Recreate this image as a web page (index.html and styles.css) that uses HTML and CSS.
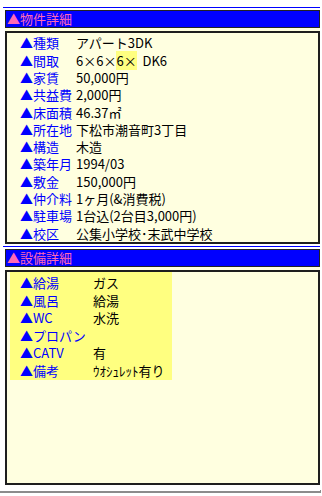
FILE: index.html
```html
<!DOCTYPE html>
<html lang="ja">
<head>
<meta charset="utf-8">
<title>物件詳細</title>
<link rel="stylesheet" href="styles.css">
</head>
<body>
<div class="page">
  <section class="panel">
    <div class="rule"></div>
    <div class="frame">
      <h2 class="head">▲物件詳細</h2>
      <dl class="box spec">
        <div class="row"><dt>▲種類</dt><dd>アパート3DK</dd></div>
        <div class="row"><dt>▲間取</dt><dd>6×6×<span class="mark">6×</span>&nbsp;&nbsp;DK6</dd></div>
        <div class="row"><dt>▲家賃</dt><dd>50,000円</dd></div>
        <div class="row"><dt>▲共益費</dt><dd>2,000円</dd></div>
        <div class="row"><dt>▲床面積</dt><dd>46.37㎡</dd></div>
        <div class="row"><dt>▲所在地</dt><dd>下松市潮音町3丁目</dd></div>
        <div class="row"><dt>▲構造</dt><dd>木造</dd></div>
        <div class="row"><dt>▲築年月</dt><dd>1994/03</dd></div>
        <div class="row"><dt>▲敷金</dt><dd>150,000円</dd></div>
        <div class="row"><dt>▲仲介料</dt><dd>1ヶ月(&amp;消費税)</dd></div>
        <div class="row"><dt>▲駐車場</dt><dd>1台込(2台目3,000円)</dd></div>
        <div class="row"><dt>▲校区</dt><dd>公集小学校･末武中学校</dd></div>
      </dl>
    </div>
  </section>

  <section class="panel second">
    <div class="rule"></div>
    <div class="frame">
      <h2 class="head">▲設備詳細</h2>
      <div class="box facilities">
        <dl class="equip">
          <div class="row"><dt>▲給湯</dt><dd>ガス</dd></div>
          <div class="row"><dt>▲風呂</dt><dd>給湯</dd></div>
          <div class="row"><dt>▲WC</dt><dd>水洗</dd></div>
          <div class="row"><dt>▲プロパン</dt><dd></dd></div>
          <div class="row"><dt>▲CATV</dt><dd>有</dd></div>
          <div class="row"><dt>▲備考</dt><dd>ｳｵｼｭﾚｯﾄ有り</dd></div>
        </dl>
      </div>
    </div>
  </section>

  <div class="base"></div>
</div>
</body>
</html>
```

FILE: styles.css
```css
* {
  box-sizing: border-box;
}

body {
  margin: 0;
  background: #fff;
  font-family: "Noto Sans CJK JP", "Noto Sans", sans-serif;
  font-size: 13px;
  color: #000;
}

.page {
  padding-top: 7px;
}

/* pale yellow panel ground */
.frame,
.box {
  background-color: #ffffe0;
}

.panel {
  margin-left: 3px;
  width: 317px;
}

.panel.second {
  margin-top: 2px;
}

.rule {
  height: 1px;
  background: #0000ff;
  margin-bottom: 2px;
}

.frame {
  margin-left: 2px;
  width: 315px;
  display: flex;
  flex-direction: column;
  gap: 3px;
}

.head {
  margin: 0;
  height: 18px;
  border: 1px solid #222;
  background: #0000ff;
  color: #ff69b4;
  font-size: 13px;
  font-weight: normal;
  line-height: 16px;
  padding-left: 1px;
}

.box {
  border: 2px solid #1e1e1e;
  margin: 0;
}

dl,
dt,
dd {
  margin: 0;
}

.row {
  display: grid;
  white-space: nowrap;
}

dt {
  color: #0000ff;
}

/* 物件詳細 */
.spec {
  height: 213px;
  padding: 1.4px 0 0 13px;
}

.spec .row {
  grid-template-columns: 56px 1fr;
  height: 17.3px;
  line-height: 17.3px;
}

/* stronger yellow for highlighted cells */
.mark,
.equip {
  background-color: #ffff80;
}

/* 設備詳細 */
.facilities {
  height: 215px;
  padding: 0 0 0 3px;
}

.equip {
  width: 162px;
  padding: 2px 0 1px 10px;
}

.equip .row {
  grid-template-columns: 73px 1fr;
  height: 17.5px;
  line-height: 17.5px;
}

.base {
  margin-top: 5px;
  width: 321px;
  height: 3px;
  border-bottom: 2px solid #8c8c8c;
  border-right: 1px solid #8c8c8c;
}
```
